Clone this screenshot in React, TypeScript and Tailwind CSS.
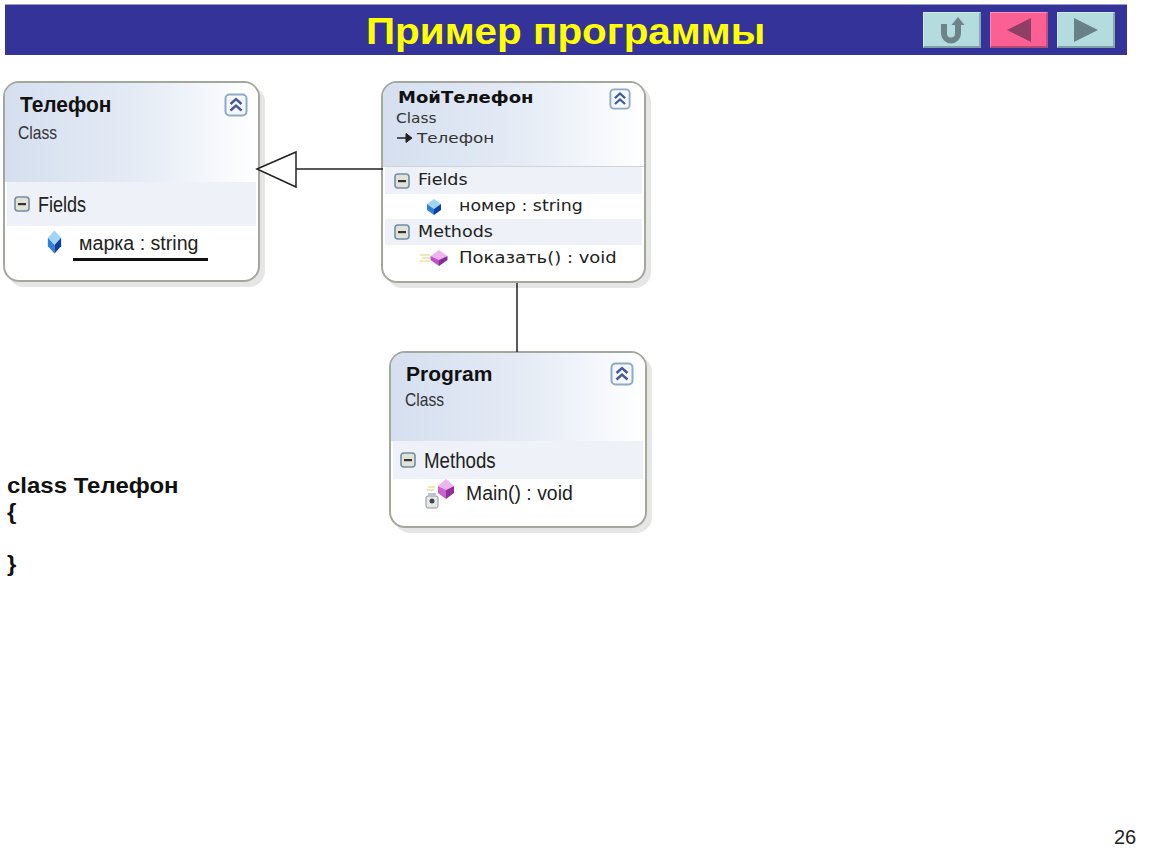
import * as React from "react";

const sans = "font-['Liberation_Sans',Arial,sans-serif]";
const wide = "font-['DejaVu_Sans',sans-serif]";

function NavButton({ pink, children }: { pink?: boolean; children: React.ReactNode }) {
  return (
    <div
      className={`flex h-[36px] w-[58px] items-center justify-center border-t border-l border-b-2 border-r-2 ${
        pink
          ? "bg-[#fb5f93] border-t-[#fb8fb3] border-l-[#fb8fb3] border-b-[#b04a72] border-r-[#c05080]"
          : "bg-[#b4dcdf] border-t-[#cfeaec] border-l-[#cfeaec] border-b-[#7f9ea2] border-r-[#8aa8ac]"
      }`}
    >
      {children}
    </div>
  );
}

function Collapse({ size }: { size: number }) {
  return (
    <svg width={size} height={size} viewBox="0 0 24 24" className="shrink-0">
      <rect x="1.5" y="1.5" width="21" height="21" rx="4" fill="#f4f7fc" stroke="#8fa9c8" strokeWidth="2" />
      <path d="M6.500 11 12 6l5.500 5M6.500 17.500 12 12.500l5.500 5" fill="none" stroke="#44579c" strokeWidth="2.400" />
    </svg>
  );
}

function MinusBox() {
  return (
    <svg width="16" height="16" viewBox="0 0 16 16" className="shrink-0">
      <rect x="1" y="1" width="14" height="14" rx="3" fill="#e4e2d6" stroke="#6e8fa8" strokeWidth="1.600" />
      <rect x="4" y="7" width="8" height="2.200" fill="#333" />
    </svg>
  );
}

function FieldIcon({ tall }: { tall?: boolean }) {
  return (
    <svg width={tall ? 17 : 18} height={tall ? 26 : 18} viewBox="0 0 18 18" preserveAspectRatio="none" className="shrink-0">
      <path d="M9 1 16 6 9 11 2 6Z" fill="#9fd6f5" />
      <path d="M2 6 9 11v6L2 12Z" fill="#2f7fd6" />
      <path d="M16 6 9 11v6l7-5Z" fill="#0f3f9e" />
    </svg>
  );
}

function MethodIcon() {
  return (
    <svg width="30" height="18" viewBox="0 0 30 18" className="shrink-0">
      <path d="M1 6h10M3 9h8M1 12h10" stroke="#e6e29a" strokeWidth="1.500" />
      <path d="M20 1l8.500 6L20 11l-8.500-4Z" fill="#eeb4ee" />
      <path d="M11.500 7 20 11v6l-8.500-6Z" fill="#c050c8" />
      <path d="M28.500 7 20 11v6l8.500-6Z" fill="#8a2a98" />
    </svg>
  );
}

function MainIcon() {
  return (
    <svg width="32" height="30" viewBox="0 0 32 30" className="shrink-0">
      <path d="M4 8h7M3 11h7" stroke="#e6e29a" strokeWidth="1.500" />
      <path d="M22 0l8 7-8 4-8-4Z" fill="#eeb4ee" />
      <path d="M14 7l8 4v9l-8-6Z" fill="#c860d0" />
      <path d="M30 7l-8 4v9l8-6Z" fill="#903098" />
      <rect x="2" y="17" width="12" height="12" rx="2" fill="#e8e8e8" stroke="#8d94a8" />
      <circle cx="8" cy="22" r="2.500" fill="#444" />
      <path d="M4 14h8v3H4Z" fill="#bcc4d4" />
    </svg>
  );
}

function Card({
  className,
  headerClass,
  title,
  collapse,
  children,
}: {
  className: string;
  headerClass: string;
  title: React.ReactNode;
  collapse: number;
  children: React.ReactNode;
}) {
  return (
    <div
      className={`absolute flex flex-col overflow-hidden rounded-[16px] border-2 border-[#a3a89c] bg-white shadow-[5px_5px_0_#e6e6e6] ${className}`}
    >
      <div className={`flex shrink-0 items-start justify-between bg-gradient-to-r from-[#d5dfef] via-[#e6ecf6] via-55% to-white ${headerClass}`}>
        <div className="flex flex-col">{title}</div>
        <Collapse size={collapse} />
      </div>
      {children}
    </div>
  );
}

function Section({ className, label }: { className: string; label: React.ReactNode }) {
  return (
    <div className={`mx-[2px] flex shrink-0 items-center bg-[#eef2f8] text-[#222] ${className}`}>
      <MinusBox />
      {label}
    </div>
  );
}

export default function App() {
  return (
    <div className={`relative h-[864px] w-[1150px] overflow-hidden bg-white pt-[4px] pl-[5px] ${sans}`}>
      <header className="flex h-[51px] w-[1122px] items-center border-t border-t-[#9c9cd0] bg-[#333399] pl-[361px] pr-[12px]">
        <h1 className="mt-[4px] origin-left scale-x-[1.108] text-[36.500px] font-bold leading-none text-[#ffff00]">Пример программы</h1>
        <div className="ml-auto flex gap-[9px]">
          <NavButton>
            <svg width="30" height="28" viewBox="0 0 30 28" fill="none">
              <path d="M7 8v9.500a7 7 0 0 0 14 0V8" stroke="#6c8488" strokeWidth="6" />
              <path d="M14.500 9 21 1l6.500 8Z" fill="#6c8488" />
            </svg>
          </NavButton>
          <NavButton pink>
            <svg width="26" height="26" viewBox="0 0 26 26">
              <path d="M1 13 25 1v24Z" fill="#8f3f66" />
            </svg>
          </NavButton>
          <NavButton>
            <svg width="26" height="26" viewBox="0 0 26 26">
              <path d="M25 13 1 1v24Z" fill="#688088" />
            </svg>
          </NavButton>
        </div>
      </header>

      <Card
        className="left-[3px] top-[81px] h-[201px] w-[257px]"
        headerClass="h-[99px] pl-[13px] pr-[10px] pt-[10px]"
        collapse={24}
        title={
          <>
            <span className="ml-[2px] origin-left scale-x-[0.95] text-[22px] font-bold leading-6 text-[#111]">Телефон</span>
            <span className="mt-[6px] origin-left scale-x-[0.82] text-[19px] leading-5 text-[#333]">Class</span>
          </>
        }
      >
        <Section
          className="h-[44px] gap-[8px] pl-[7px]"
          label={<span className="origin-left scale-x-[0.82] text-[22px]">Fields</span>}
        />
        <div className="flex items-start gap-[10px] pl-[41px] pt-[3px]">
          <FieldIcon tall />
          <span className="mt-[2px] w-[135px] border-b-[3px] border-b-[#111] pb-px pl-[6px] text-[#222]">
            <span className="inline-block origin-left scale-x-[0.98] text-[20px] leading-6">марка : string</span>
          </span>
        </div>
      </Card>

      <Card
        className="left-[381px] top-[81px] h-[202px] w-[265px]"
        headerClass={`h-[84px] border-b border-b-[#d0d4d8] pl-[13px] pr-[13px] pt-[5px] ${wide}`}
        collapse={22}
        title={
          <>
            <span className="ml-[2px] origin-left scale-x-[1.125] text-[16px] font-bold leading-5 text-[#111]">МойТелефон</span>
            <span className="origin-left scale-x-[1.1] text-[14px] leading-5 text-[#333]">Class</span>
            <span className="flex items-center gap-[3px] text-[14px] leading-5 text-[#333]">
              <svg width="18" height="12" viewBox="0 0 18 12">
                <path d="M1 6h9" stroke="#222" strokeWidth="1.500" />
                <path d="M10 1.500 16 6l-6 4.500Z" fill="#222" stroke="#222" />
              </svg>
              <span className="origin-left scale-x-[1.2]">Телефон</span>
            </span>
          </>
        }
      >
        <div className={wide}>
          <Section
            className="h-[27px] gap-[8px] pl-[9px]"
            label={<span className="origin-left scale-x-[1.17] text-[15px]">Fields</span>}
          />
          <div className="flex h-[25px] items-center gap-[16px] pl-[42px] text-[15px] text-[#222]">
            <FieldIcon />
            <span className="origin-left scale-x-[1.16]">номер : string</span>
          </div>
          <Section
            className="h-[26px] gap-[8px] pl-[9px]"
            label={<span className="origin-left scale-x-[1.17] text-[15px]">Methods</span>}
          />
          <div className="flex h-[26px] items-center gap-[10px] pl-[36px] text-[15px] text-[#222]">
            <MethodIcon />
            <span className="origin-left scale-x-[1.2]">Показать() : void</span>
          </div>
        </div>
      </Card>

      <Card
        className="left-[389px] top-[351px] h-[177px] w-[258px]"
        headerClass="h-[88px] pl-[14px] pr-[11px] pt-[9px]"
        collapse={24}
        title={
          <>
            <span className="ml-px text-[21px] font-bold leading-6 text-[#111]">Program</span>
            <span className="mt-[4px] origin-left scale-x-[0.82] text-[19px] leading-5 text-[#333]">Class</span>
          </>
        }
      >
        <Section
          className="h-[38px] gap-[8px] pl-[7px]"
          label={<span className="origin-left scale-x-[0.85] text-[22px]">Methods</span>}
        />
        <div className="flex items-start gap-[10px] pl-[33px]">
          <MainIcon />
          <span className="mt-[2px] origin-left scale-x-[0.97] text-[20px] leading-6 text-[#222]">Main() : void</span>
        </div>
      </Card>

      <svg className="absolute left-[250px] top-[145px]" width="290" height="210" viewBox="0 0 290 210">
        <path d="M46 24H133" stroke="#222" strokeWidth="1.500" />
        <path d="M7 24 46 7v35Z" fill="#fff" stroke="#222" strokeWidth="1.500" />
        <path d="M267 138v69" stroke="#222" strokeWidth="1.500" />
      </svg>

      <pre className={`absolute left-[7px] top-[473px] origin-left scale-x-[1.09] text-[22px] font-bold leading-[26px] text-[#111] ${sans}`}>
        {"class Телефон\n{\n\n}"}
      </pre>

      <div className="absolute left-[1114px] top-[825px] text-[20px] leading-6 text-[#222]">26</div>
    </div>
  );
}
